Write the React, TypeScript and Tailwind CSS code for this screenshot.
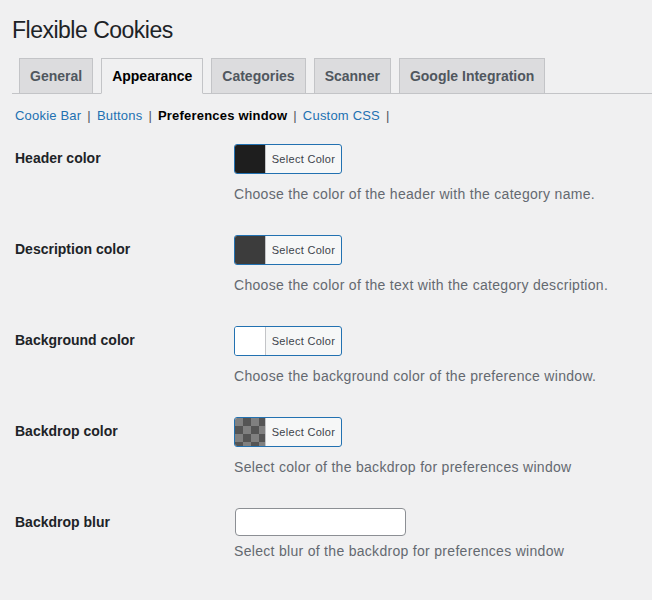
import React from "react";

const tabs = ["General", "Appearance", "Categories", "Scanner", "Google Integration"];

const subLinks = [
  { label: "Cookie Bar", current: false },
  { label: "Buttons", current: false },
  { label: "Preferences window", current: true },
  { label: "Custom CSS", current: false },
];

type Row = {
  label: string;
  desc: string;
  swatch?: string;
};

const rows: Row[] = [
  { label: "Header color", desc: "Choose the color of the header with the category name.", swatch: "bg-[#1e1e1e]" },
  { label: "Description color", desc: "Choose the color of the text with the category description.", swatch: "bg-[#3c3c3c]" },
  { label: "Background color", desc: "Choose the background color of the preference window.", swatch: "bg-white" },
  {
    label: "Backdrop color",
    desc: "Select color of the backdrop for preferences window",
    swatch: "bg-[repeating-conic-gradient(#555555_0_25%,#808080_0_50%)] bg-[length:16px_16px]",
  },
];

const ColorButton = ({ swatch }: { swatch: string }) => (
  <button
    type="button"
    className="flex h-[30px] w-[108px] overflow-hidden rounded-[3px] border border-[#2271b1] bg-[#f6f7f7]"
  >
    <span className={`h-full w-[30px] shrink-0 ${swatch}`} />
    <span className="flex h-full flex-1 items-center justify-center border-l border-[#c3c4c7] text-[11px] tracking-[0.3px] text-[#3c434a]">
      Select Color
    </span>
  </button>
);

export default function App() {
  return (
    <div className="min-h-[600px] w-full bg-[#f0f0f1] pl-3 font-['Liberation_Sans',Arial,sans-serif] text-[#1d2327]">
      <h1 className="pt-[17px] text-[23px] leading-[26px] tracking-[-0.5px]">Flexible Cookies</h1>

      {/* tabs */}
      <div className="mt-[15px] flex gap-[8px] border-b border-[#c3c4c7] pl-[7px]">
        {tabs.map((tab) => {
          const active = tab === "Appearance";
          return (
            <div
              key={tab}
              className={`-mb-px border border-[#c3c4c7] px-[10px] py-[5px] text-[14px] font-bold leading-[24px] ${
                active ? "border-b-[#f0f0f1] bg-[#f0f0f1] text-black" : "bg-[#dcdcde] text-[#50575e]"
              }`}
            >
              {tab}
            </div>
          );
        })}
      </div>

      {/* sub navigation */}
      <div className="mt-[14px] flex items-center pl-[3px] text-[13px] leading-[16px] tracking-[0.2px]">
        {subLinks.map((link) => (
          <span key={link.label} className="flex items-center">
            <span className={link.current ? "font-bold text-black" : "text-[#2271b1]"}>{link.label}</span>
            <span className="px-[6px] text-[#50575e]">|</span>
          </span>
        ))}
      </div>

      {/* settings */}
      <div className="mt-[5px] pl-[3px]">
        {rows.map((row) => (
          <div key={row.label} className="grid h-[91px] grid-cols-[219px_1fr] py-[15px]">
            <div className="pt-[5px] text-[14px] font-bold leading-[18px]">{row.label}</div>
            <div>
              <ColorButton swatch={row.swatch ?? "bg-white"} />
              <p className="mt-[10px] text-[14px] leading-[20px] tracking-[0.3px] text-[#646970]">{row.desc}</p>
            </div>
          </div>
        ))}
        <div className="grid grid-cols-[219px_1fr] py-[15px]">
          <div className="pt-[5px] text-[14px] font-bold leading-[18px]">Backdrop blur</div>
          <div>
            <input
              type="text"
              className="ml-px block h-[28px] w-[171px] rounded-[4px] border border-[#8c8f94] bg-white px-2 text-[14px]"
            />
            <p className="mt-[5px] text-[14px] leading-[20px] tracking-[0.3px] text-[#646970]">
              Select blur of the backdrop for preferences window
            </p>
          </div>
        </div>
      </div>
    </div>
  );
}
